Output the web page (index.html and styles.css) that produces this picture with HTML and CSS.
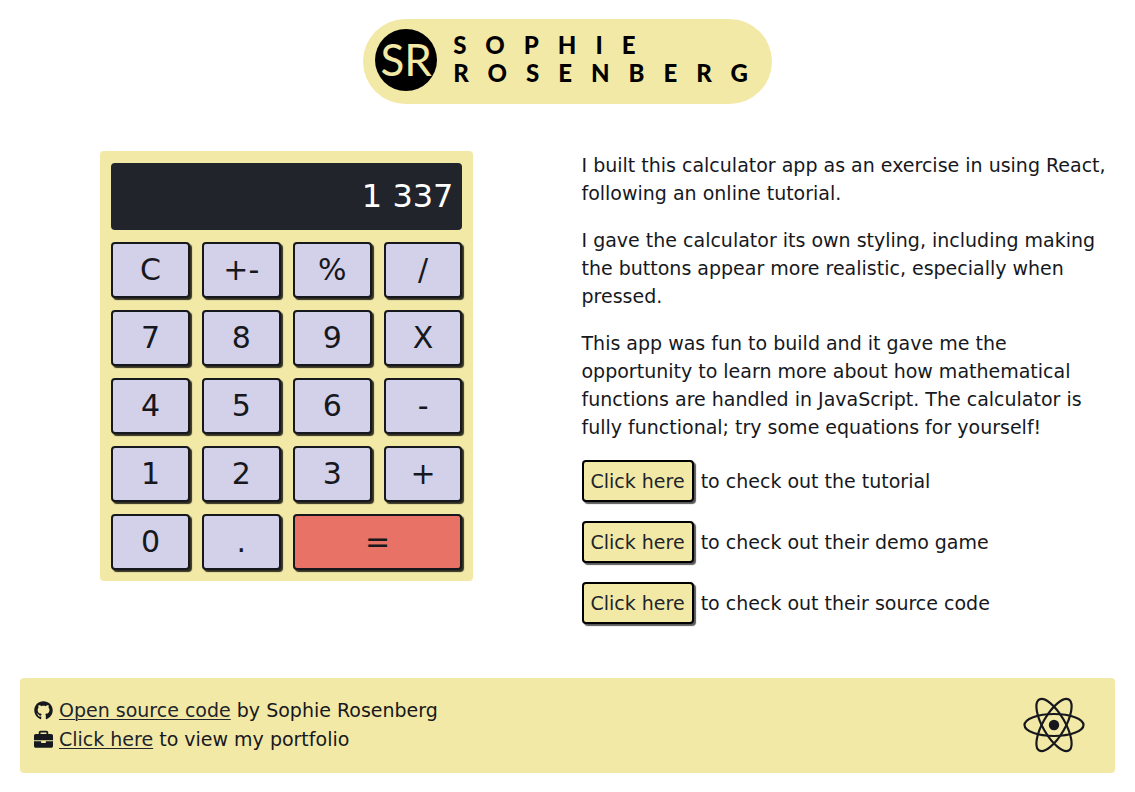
FILE: index.html
```html
<!DOCTYPE html>
<html lang="en">
<head>
<meta charset="utf-8">
<meta name="viewport" content="width=device-width, initial-scale=1">
<title>Calculator – Sophie Rosenberg</title>
<link rel="stylesheet" href="styles.css">
</head>
<body>
<header class="brand">
  <span class="monogram">SR</span>
  <span class="brand-name"><span>SOPHIE</span><span>ROSENBERG</span></span>
</header>
<main class="content">
  <section class="calculator" aria-label="Calculator">
    <output class="display">1 337</output>
    <div class="keys">
      <button class="key">C</button>
      <button class="key">+-</button>
      <button class="key">%</button>
      <button class="key">/</button>
      <button class="key">7</button>
      <button class="key">8</button>
      <button class="key">9</button>
      <button class="key">X</button>
      <button class="key">4</button>
      <button class="key">5</button>
      <button class="key">6</button>
      <button class="key">-</button>
      <button class="key">1</button>
      <button class="key">2</button>
      <button class="key">3</button>
      <button class="key">+</button>
      <button class="key">0</button>
      <button class="key">.</button>
      <button class="key key-equals">=</button>
    </div>
  </section>
  <section class="about">
    <p>I built this calculator app as an exercise in using React, following an online tutorial.</p>
    <p>I gave the calculator its own styling, including making the buttons appear more realistic, especially when pressed.</p>
    <p>This app was fun to build and it gave me the opportunity to learn more about how mathematical functions are handled in JavaScript. The calculator is fully functional; try some equations for yourself!</p>
    <p class="link-row"><a class="link-button" href="#tutorial">Click here</a><span>to check out the tutorial</span></p>
    <p class="link-row"><a class="link-button" href="#demo">Click here</a><span>to check out their demo game</span></p>
    <p class="link-row"><a class="link-button" href="#source">Click here</a><span>to check out their source code</span></p>
  </section>
</main>
<footer class="footer">
  <div>
    <div class="footer-line">
      <svg class="icon" viewBox="0 0 496 512" aria-hidden="true"><path d="M165.900 397.400c0 2-2.300 3.600-5.200 3.600-3.300.3-5.600-1.300-5.600-3.600 0-2 2.300-3.600 5.200-3.600 3-.3 5.600 1.300 5.600 3.600zm-31.100-4.500c-.7 2 1.300 4.300 4.300 4.900 2.600 1 5.600 0 6.200-2s-1.300-4.300-4.300-5.200c-2.600-.7-5.500.3-6.200 2.300zm44.200-1.700c-2.900.7-4.900 2.600-4.600 4.900.3 2 2.900 3.300 5.900 2.600 2.900-.7 4.900-2.600 4.600-4.600-.3-1.900-3-3.200-5.900-2.900zM244.800 8C106.100 8 0 113.300 0 252c0 110.900 69.800 205.800 169.500 239.200 12.800 2.300 17.300-5.600 17.300-12.100 0-6.200-.3-40.400-.3-61.400 0 0-70 15-84.700-29.800 0 0-11.400-29.100-27.800-36.600 0 0-22.900-15.700 1.600-15.400 0 0 24.900 2 38.600 25.800 21.900 38.600 58.600 27.500 72.900 20.900 2.300-16 8.800-27.100 16-33.700-55.900-6.200-112.300-14.300-112.300-110.500 0-27.500 7.600-41.300 23.600-58.900-2.600-6.500-11.100-33.300 2.600-67.900 20.900-6.500 69 27 69 27 20-5.600 41.500-8.500 62.800-8.500s42.800 2.900 62.800 8.500c0 0 48.100-33.600 69-27 13.700 34.700 5.200 61.400 2.600 67.900 16 17.700 25.800 31.500 25.800 58.900 0 96.500-58.900 104.200-114.800 110.500 9.200 7.900 17 22.900 17 46.400 0 33.700-.3 75.400-.3 83.600 0 6.500 4.600 14.400 17.300 12.100C428.200 457.800 496 362.900 496 252 496 113.300 383.500 8 244.800 8z"/></svg>
      <span><a href="#code">Open source code</a> by Sophie Rosenberg</span>
    </div>
    <div class="footer-line">
      <svg class="icon" viewBox="0 0 512 512" aria-hidden="true"><path d="M320 336c0 8.800-7.200 16-16 16h-96c-8.800 0-16-7.200-16-16v-30H0v126c0 25.600 22.400 48 48 48h416c25.600 0 48-22.400 48-48V306H320v30zm144-228h-80V66c0-25.600-22.400-48-48-48H176c-25.600 0-48 22.400-48 48v42H48c-25.600 0-48 22.400-48 48v118h512V156c0-25.600-22.400-48-48-48zm-128 0H176V66h160v42z"/></svg>
      <span><a href="#portfolio">Click here</a> to view my portfolio</span>
    </div>
  </div>
  <svg class="react-logo" viewBox="-31 -28 62 56" role="img" aria-label="React"><circle r="5.200"/><g fill="none" stroke="#16181d" stroke-width="2.200"><ellipse rx="29.500" ry="11"/><ellipse rx="29.500" ry="11" transform="rotate(60)"/><ellipse rx="29.500" ry="11" transform="rotate(120)"/></g></svg>
</footer>
</body>
</html>
```
FILE: styles.css
```css
* {
  box-sizing: border-box;
}

body {
  margin: 0;
  padding: 19px 20px;
  background: #fff;
  color: #16181d;
  font: 19px/28px Verdana, "DejaVu Sans", sans-serif;
}

.brand {
  display: flex;
  align-items: center;
  gap: 16px;
  width: fit-content;
  margin: 0 auto 47px;
  padding: 10px 5px 13px 12px;
  border-radius: 43px;
  background: #f3e9a6;
  color: #000;
  font-family: Lato, sans-serif;
}

.monogram {
  display: grid;
  place-items: center;
  width: 62px;
  height: 62px;
  border-radius: 50%;
  background: #000;
  color: #f3e9a6;
  font-size: 44px;
  font-weight: 400;
  line-height: 60px;
  align-content: start;
}

.brand-name {
  display: flex;
  flex-direction: column;
  padding-bottom: 3px;
  font-size: 24px;
  font-weight: 900;
  line-height: 28px;
  letter-spacing: 19px;
}

.content {
  display: grid;
  grid-template-columns: 1fr 1fr;
  gap: 28px;
  margin-bottom: 54px;
}

.calculator {
  justify-self: center;
  align-self: start;
  display: grid;
  gap: 12px;
  width: 70%;
  padding: 12px 11px 11px;
  border-radius: 4px;
  background: #f3e9a6;
}

.display {
  padding: 0 9px;
  border-radius: 4px;
  background: #21242b;
  color: #fff;
  font-size: 32px;
  line-height: 67px;
  text-align: right;
}

.keys {
  display: grid;
  grid-template-columns: repeat(4, 1fr);
  gap: 12px;
}

.key {
  padding: 0;
  border: 2px solid #16181d;
  border-radius: 4px;
  background: #d2d1e9;
  box-shadow: 2px 2px 1px rgba(0, 0, 0, 0.8);
  color: #16181d;
  font: 30px/52px Verdana, "DejaVu Sans", sans-serif;
}

.key-equals {
  grid-column: span 2;
  background: #e77265;
}

.about p {
  margin: 0 0 19px;
}

.about p:last-child {
  margin-bottom: 0;
}

.link-row {
  display: flex;
  align-items: center;
  gap: 7px;
}

.link-button {
  padding: 5px 7px;
  border: 2px solid #000;
  border-radius: 4px;
  background: #f3e9a6;
  box-shadow: 2px 2px 1px rgba(0, 0, 0, 0.65);
  color: #21242b;
  text-decoration: none;
}

.footer {
  display: flex;
  align-items: center;
  justify-content: space-between;
  padding: 18px 30px 19px 14px;
  border-radius: 4px;
  background: #f3e9a6;
}

.footer-line {
  display: flex;
  align-items: center;
  gap: 6px;
  line-height: 29px;
}

.footer a {
  color: #21242b;
  text-decoration-thickness: 1px;
  text-underline-offset: 2px;
}

.icon {
  width: 19px;
  height: 19px;
  fill: #16181d;
}

.react-logo {
  width: 62px;
  height: 56px;
  fill: #16181d;
}
```
